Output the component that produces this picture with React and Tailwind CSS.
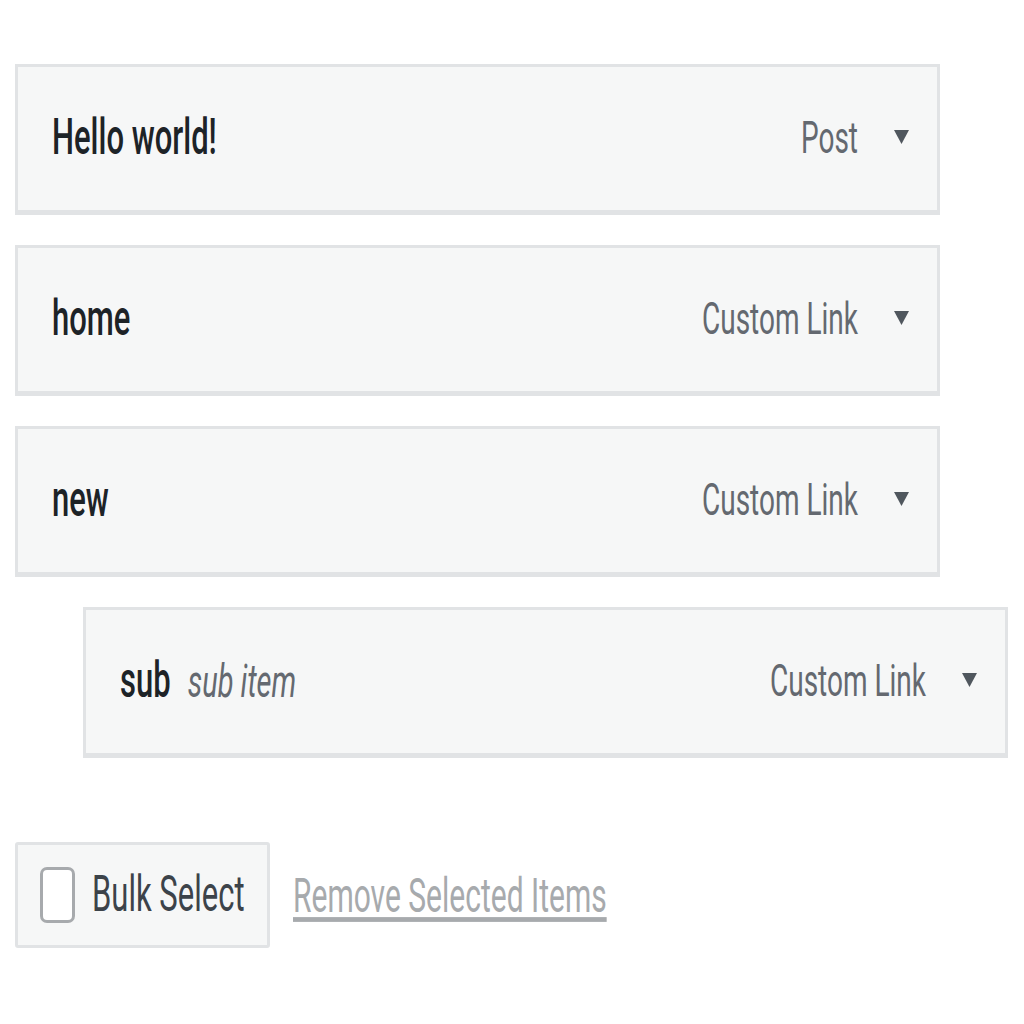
import { useState } from "react";

const items = [
  { id: 1, title: "Hello world!", type: "Post", depth: 0 },
  { id: 2, title: "home", type: "Custom Link", depth: 0 },
  { id: 3, title: "new", type: "Custom Link", depth: 0 },
  { id: 4, title: "sub", note: "sub item", type: "Custom Link", depth: 1 },
];

function Stretch({ className, children }) {
  return <span className={`inline-block origin-center scale-y-[1.6] ${className}`}>{children}</span>;
}

function MenuItem({ item }) {
  return (
    <div
      className={`flex h-[151px] w-[925px] items-center justify-between border-[3px] border-b-[5px] border-[#e1e3e5] bg-[#f6f7f7] pl-[34px] pr-[28px] ${
        item.depth ? "ml-[68px]" : ""
      }`}
    >
      <div className="flex items-center gap-[17px]">
        <Stretch className="text-[31px] font-medium text-[#1d2327]">{item.title}</Stretch>
        {item.note && <Stretch className="text-[29px] italic text-[#646970]">{item.note}</Stretch>}
      </div>
      <div className="flex items-center gap-[36px]">
        <Stretch className="text-[28px] text-[#646970]">{item.type}</Stretch>
        <svg width="15" height="18" viewBox="0 0 15 18" className="mt-[-4px]">
          <path d="M0 2 L15 2 L7.5 16 Z" fill="#50575e" />
        </svg>
      </div>
    </div>
  );
}

export default function App() {
  const [checked, setChecked] = useState(false);

  return (
    <div className="min-h-[1024px] bg-white pl-[15px] pt-[64px]" style={{ fontFamily: "Roboto, 'Liberation Sans', sans-serif" }}>
      <div className="flex flex-col gap-[30px]">
        {items.map((item) => (
          <MenuItem key={item.id} item={item} />
        ))}
      </div>
      <div className="mt-[84px] flex items-center gap-[23px]">
        <label className="flex h-[106px] w-[255px] cursor-pointer items-center gap-[17px] rounded-[3px] border-[3px] border-[#e1e3e5] bg-[#f6f7f7] pl-[22px]">
          <span
            onClick={() => setChecked(!checked)}
            className="h-[56px] w-[35px] rounded-[7px] border-[3px] border-[#a7aaad] bg-white"
          />
          <Stretch className="text-[31px] text-[#3c434a]">Bulk Select</Stretch>
        </label>
        <Stretch className="text-[30px] text-[#a7aaad] underline decoration-[3px] underline-offset-[3px]">
          Remove Selected Items
        </Stretch>
      </div>
    </div>
  );
}
